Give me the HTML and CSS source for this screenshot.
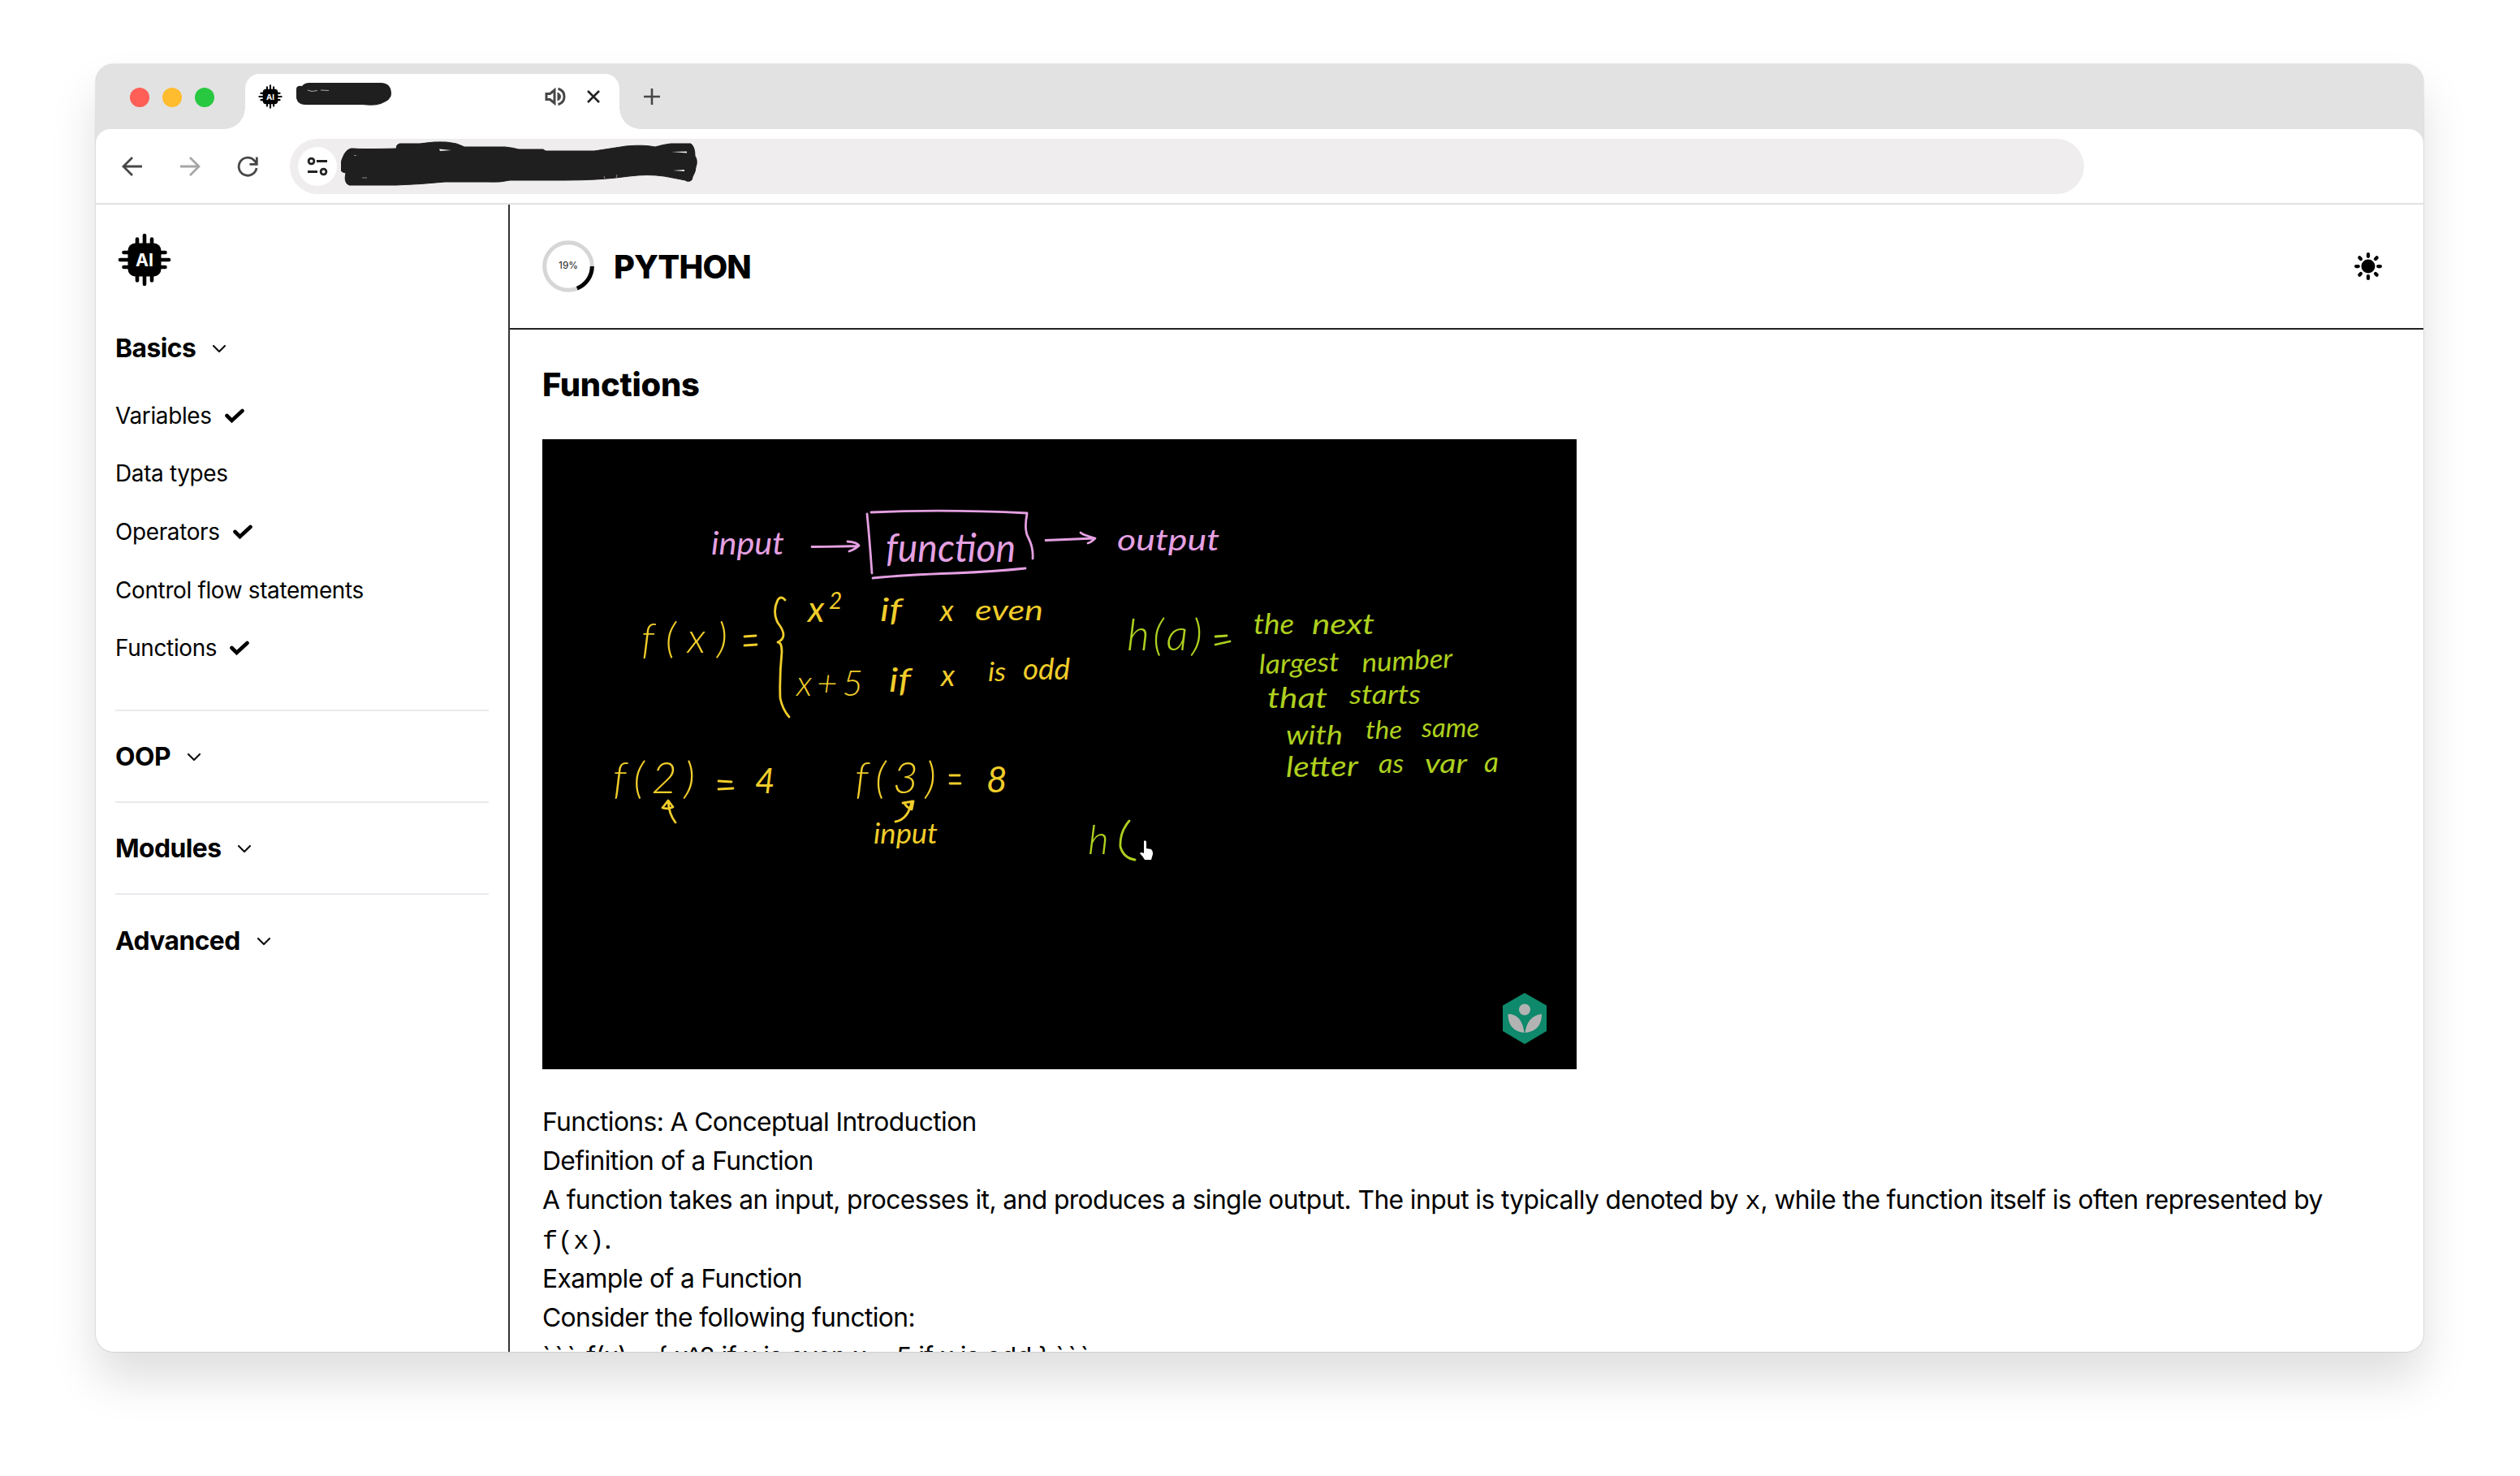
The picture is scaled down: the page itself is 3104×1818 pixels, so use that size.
FILE: index.html
```html
<!DOCTYPE html>
<html lang="en">
<head>
<meta charset="utf-8">
<title>Python – Functions</title>
<link rel="stylesheet" href="styles.css">
</head>
<body>
<svg class="defs" width="0" height="0" aria-hidden="true">
  <defs>
    <symbol id="chip" viewBox="0 0 66 66">
      <g fill="none" stroke="currentColor" stroke-width="4.6" stroke-linecap="round">
        <path d="M33 3v60M24 7.500v51M42 7.500v51M3 33h60M7.500 24h51M7.500 42h51"/>
      </g>
      <rect x="12.500" y="12.500" width="41" height="41" rx="9" fill="currentColor"/>
      <text x="33" y="41" class="chip-label" textLength="22" lengthAdjust="spacingAndGlyphs">AI</text>
    </symbol>
    <symbol id="chevron" viewBox="0 0 18 12"><path d="M2 2l7 7 7-7" fill="none" stroke="#111" stroke-width="2.200" stroke-linecap="round" stroke-linejoin="round"/></symbol>
    <symbol id="check" viewBox="0 0 24 18"><path d="M2.500 9l6 6L21.500 3" fill="none" stroke="#000" stroke-width="4.600" stroke-linecap="round"/></symbol>
  </defs>
</svg>

<div class="window">
  <header class="tabstrip">
    <div class="lights"><i class="red"></i><i class="yellow"></i><i class="green"></i></div>
    <div class="tab">
      <svg class="favicon"><use href="#chip"/></svg>
      <svg class="tab-mark" viewBox="0 0 118 30"><path d="M8 5Q11 1 17 1h88q13 0 13 14 0 7-13 12-8 3-22 1H12q-9 0-11-8V9Q1 4 8 5z" fill="#1f1f1f"/><path d="M15 10l5 1.500 7-1M31 10l10 .5" stroke="#aaa" stroke-width="1.200" fill="none"/></svg>
      <svg class="speaker" viewBox="0 0 26 24"><g fill="none" stroke="#474747" stroke-width="3"><path d="M2 8.500h4.500L12 4v16l-5.500-4.500H2z"/><path d="M16.500 2.300q7.500 2.200 7.500 9.700t-7.500 9.700"/></g><path d="M15.500 6.500q4.500 2 4.500 5.500t-4.500 5.500z" fill="#474747"/></svg>
      <svg class="close" viewBox="0 0 18 18"><path d="M2 2l14 14M16 2L2 16" stroke="#222" stroke-width="2.600"/></svg>
    </div>
    <svg class="plus" viewBox="0 0 22 22"><path d="M11 1v20M1 11h20" stroke="#474747" stroke-width="2.600"/></svg>
  </header>

  <div class="toolbar">
    <svg class="nav" viewBox="0 0 26 26"><path d="M25 13H2.500M13 2L2 13l11 11" fill="none" stroke="#474747" stroke-width="2.800"/></svg>
    <svg class="nav" viewBox="0 0 26 26"><path d="M1 13h22.500M13 2l11 11-11 11" fill="none" stroke="#a6a6a6" stroke-width="2.800"/></svg>
    <svg class="nav" viewBox="0 0 26 26"><path d="M24 15A11 11 0 1 1 21.500 6L24 9M24.300 1.500v8.800h-8.800" fill="none" stroke="#474747" stroke-width="2.800"/></svg>
    <div class="address">
      <span class="site"><svg viewBox="0 0 26 24"><g fill="none" stroke="#222" stroke-width="2.800"><circle cx="5.500" cy="5.500" r="3.400"/><path d="M12 5.500h13M1 18.500h12"/><circle cx="20.500" cy="18.500" r="3.400"/></g></svg></span>
      <svg class="address-mark" viewBox="421 174 440 56"><path d="M437 183q10 1 52 0 0-5 4-6l25 0q38-6 55 4 30 0 50 0 10 1 17 3l30 0 3 2h60q20-3 39-6 22-2 36 1 10-3 19-4h25q5 4 5 15 4 6 1 14 0 5-4 12 0 4-3 5-4 1-6-1-15-3-26-5-20-3-43 0-35 5-80 5h-67q-12 3-27 2h-53q-30 3-60 4h-58q-7-3-4-15-8-1-7-8 4-20 13-22z" fill="#1f1f1f" stroke="#1f1f1f" stroke-linejoin="round"/><path d="M542 183.500l15 1.500-14 1zM828 187l19-.5v2zM830 210l14-1v2z" fill="#efedee"/><path d="M437 191.500h3M447 219h6M745 217l1 3M761 215l-1 4" stroke="#888"/></svg>
    </div>
  </div>

  <div class="app">
    <aside class="sidebar">
      <svg class="logo"><use href="#chip"/></svg>
      <section>
        <h3>Basics<svg class="chev"><use href="#chevron"/></svg></h3>
        <ul>
          <li>Variables<svg class="check"><use href="#check"/></svg></li>
          <li>Data types</li>
          <li>Operators<svg class="check"><use href="#check"/></svg></li>
          <li>Control flow statements</li>
          <li>Functions<svg class="check"><use href="#check"/></svg></li>
        </ul>
      </section>
      <section><h3>OOP<svg class="chev"><use href="#chevron"/></svg></h3></section>
      <section><h3>Modules<svg class="chev"><use href="#chevron"/></svg></h3></section>
      <section><h3>Advanced<svg class="chev"><use href="#chevron"/></svg></h3></section>
    </aside>

    <main>
      <div class="course">
        <svg class="ring" viewBox="0 0 64 64"><circle cx="32" cy="32" r="29.300" fill="none" stroke="#d6d6d6" stroke-width="5"/><path d="M61.300 32A29.300 29.300 0 0 1 42.800 59.200" fill="none" stroke="#000" stroke-width="5"/><text x="32" y="35" text-anchor="middle" textLength="24">19%</text></svg>
        <h1>PYTHON</h1>
        <svg class="sun" viewBox="-16 -16 32 32"><circle r="8"/><path d="M0-11.500v-2.500M0 11.500v2.500M-11.500 0h-2.500M11.500 0h2.500M-8.500-8.500l-1.500-1.500M8.500-8.500l1.500-1.500M-8.500 8.500l-1.500 1.500M8.500 8.500l1.500 1.500" stroke="#000" stroke-width="4" stroke-linecap="round"/></svg>
      </div>
      <article>
        <h2>Functions</h2>
        <svg class="video" viewBox="668 541 1274 776">
          <g class="pink">
            <g class="ink">
              <path d="M1000 673.500q30 0 57-1M1044 667q12 1 14 5-4 4-12 7"/>
              <path d="M1068 633q3 30 6 73M1073 631q90-4 192 1M1265 633q-4 20 2 30 6 12 5 25M1075 712q40-4 100-6 50-2 88-6"/>
              <path d="M1288 665.500l60-2.500M1331 656q3 3 18 7-5 5-9 6"/>
            </g>
            <text x="876" y="683" font-size="38" textLength="90" lengthAdjust="spacingAndGlyphs">input</text>
            <text x="1091" y="692" font-size="49" textLength="160" lengthAdjust="spacingAndGlyphs">function</text>
            <text x="1376" y="678" font-size="36" textLength="126" lengthAdjust="spacingAndGlyphs">output</text>
          </g>
          <g class="yellow-ink">
            <g class="ink">
              <path d="M967 739q-5-6-9 0-7 14 0 28 14 18 0 24 5 0 5 12-3 30-2 57 3 14 11 23"/>
              <path d="M917 784l14-1M917 795l15-1M885 962l16 1M885 972l18-1M1170 955h12M1170 965h13"/>
              <path d="M832 1013q-8-10-9-26M816 995l7-9 6 8q-6 3-13 1M1103 1012q16-3 20-25M1112 989l13-2-2 10q-6-2-9-8"/>
            </g>
            <text class="large" x="790" y="804" font-size="52" textLength="106">f(x)</text>
            <text x="995" y="766" font-size="44">x</text><text x="1021" y="750" font-size="28">2</text>
            <text x="1084" y="765" font-size="38" textLength="27" lengthAdjust="spacingAndGlyphs">if</text><text x="1158" y="765" font-size="36">x</text><text x="1201" y="764" font-size="34" textLength="84" lengthAdjust="spacingAndGlyphs">even</text>
            <text class="large" x="981" y="857" font-size="44" textLength="82">x+5</text><text x="1095" y="852" font-size="40" textLength="27" lengthAdjust="spacingAndGlyphs">if</text><text x="1159" y="845" font-size="37">x</text><text x="1217" y="839" font-size="33" textLength="22" lengthAdjust="spacingAndGlyphs">is</text><text x="1260" y="837" font-size="36" textLength="58" lengthAdjust="spacingAndGlyphs">odd</text>
            <text class="large" x="755" y="977" font-size="54" textLength="101">f(2)</text><text x="930" y="977" font-size="42">4</text>
            <text class="large" x="1053" y="977" font-size="54" textLength="100">f(3)</text><text x="1215" y="976" font-size="44">8</text>
            <text x="1076" y="1039" font-size="34" textLength="79" lengthAdjust="spacingAndGlyphs">input</text>
          </g>
          <g class="green-ink">
            <g class="ink"><path d="M1497 784l14-1M1497 794l18-4M1391 1011q-12 14-11 32 4 14 18 16"/></g>
            <text class="large" x="1388" y="801" font-size="54" textLength="93">h(a)</text>
            <text x="1544" y="781" font-size="35" textLength="50" lengthAdjust="spacingAndGlyphs">the</text><text x="1616" y="781" font-size="35" textLength="77" lengthAdjust="spacingAndGlyphs">next</text>
            <text x="1551" y="830" font-size="33" textLength="99" lengthAdjust="spacingAndGlyphs" transform="rotate(-2 1551 830)">largest</text><text x="1678" y="828" font-size="33" textLength="112" lengthAdjust="spacingAndGlyphs" transform="rotate(-3 1678 828)">number</text>
            <text x="1561" y="872" font-size="35" textLength="74" lengthAdjust="spacingAndGlyphs">that</text><text x="1662" y="867" font-size="33" textLength="88" lengthAdjust="spacingAndGlyphs">starts</text>
            <text x="1584" y="917" font-size="32" textLength="70" lengthAdjust="spacingAndGlyphs">with</text><text x="1682" y="910" font-size="30" textLength="45" lengthAdjust="spacingAndGlyphs">the</text><text x="1751" y="908" font-size="32" textLength="71" lengthAdjust="spacingAndGlyphs">same</text>
            <text x="1584" y="957" font-size="35" textLength="89" lengthAdjust="spacingAndGlyphs" transform="rotate(-1 1584 957)">letter</text><text x="1698" y="952" font-size="32" textLength="31" lengthAdjust="spacingAndGlyphs">as</text><text x="1755" y="952" font-size="32" textLength="52" lengthAdjust="spacingAndGlyphs">var</text><text x="1828" y="951" font-size="35">a</text>
            <text class="large" x="1340" y="1052" font-size="50">h</text>
          </g>
          <path d="M1409 1036q2-2 3 1v8l6 1q2 2 2 6l-2 7h-8q-3-5-6-8 1-2 5 0z" fill="#fff"/>
          <g><path d="M1878 1223l27 15.500v31.500l-27 16-27-16v-31.500z" fill="#0e896b"/><g fill="#b3b3b3"><circle cx="1878" cy="1243.500" r="7"/><path d="M1857.500 1249q17 0 20 23-20-2-20-23zM1899 1249q0 21-20.500 23 3-21 20.500-23z"/></g></g>
        </svg>
        <div class="notes">
          <p>Functions: A Conceptual Introduction</p>
          <p>Definition of a Function</p>
          <p>A function takes an input, processes it, and produces a single output. The input is typically denoted by <code>x</code>, while the function itself is often represented by <code>f(x)</code>.</p>
          <p>Example of a Function</p>
          <p>Consider the following function:</p>
          <p><span class="ticks">```</span> f(x) = { x^2 if x is even x + 5 if x is odd } <span class="ticks">```</span></p>
        </div>
      </article>
    </main>
  </div>
</div>
</body>
</html>
```
FILE: styles.css
```css
* { box-sizing: border-box; margin: 0; padding: 0; }
body { width: 3104px; height: 1818px; padding: 79px 119px 0 118px; overflow: hidden; background: #fff; color: #000; font-family: Inter, "Liberation Sans", sans-serif; }
svg { display: block; flex: none; }
.defs { position: absolute; }
.window { height: 1586px; overflow: hidden; display: flex; flex-direction: column; border-radius: 22px; background: #e2e2e2; box-shadow: 0 0 2px rgba(0,0,0,.28), 0 34px 56px rgba(0,0,0,.13); }

.tabstrip { height: 80px; flex: none; display: flex; align-items: flex-start; padding: 12px 0 0 42px; }
.lights { display: flex; gap: 16px; padding-top: 17px; width: 142px; }
.lights i { width: 24px; height: 24px; border-radius: 50%; }
.red { background: #ff5f57; }
.yellow { background: #febc2e; }
.green { background: #28c840; }
.tab { position: relative; width: 461px; height: 68px; display: flex; align-items: flex-start; padding-left: 16px; border-radius: 18px 18px 0 0; background: #fff; }
.tab::before, .tab::after { content: ""; position: absolute; bottom: 0; width: 26px; height: 26px; }
.tab::before { left: -26px; background: radial-gradient(circle at 0 0, transparent 25.500px, #fff 26px); }
.tab::after { right: -26px; background: radial-gradient(circle at 100% 0, transparent 25.500px, #fff 26px); }
.favicon { width: 30px; height: 30px; margin-top: 13px; }
.tab-mark { width: 118px; height: 30px; margin: 10px 0 0 16px; }
.speaker { width: 26px; height: 24px; margin: 16px 0 0 189px; }
.close { width: 18px; height: 18px; margin: 19px 0 0 25px; }
.plus { width: 22px; height: 22px; margin: 17px 0 0 29px; }

.toolbar { height: 93px; flex: none; display: flex; align-items: center; padding: 1px 0 1px 32px; border-radius: 18px 18px 0 0; border-bottom: 2px solid #e2e2e2; background: #fff; }
.nav { width: 26px; height: 26px; margin-right: 45px; }
.address { width: 2210px; height: 68px; margin-left: -6px; display: flex; align-items: center; padding-left: 10px; border-radius: 34px; background: #efedee; }
.site { width: 48px; height: 48px; display: grid; place-items: center; border-radius: 50%; background: #fff; }
.site svg { width: 26px; height: 24px; }
.address-mark { width: 440px; height: 56px; margin: -6px 0 0 5px; }

.app { flex: 1; min-height: 0; display: flex; background: #fff; }
.sidebar { width: 510px; flex: none; padding: 35px 24px 0; border-right: 2px solid #333; }
.logo { width: 66px; height: 66px; margin-left: 3px; }
h3 { height: 111px; display: flex; align-items: center; padding-top: 1px; font-size: 31.800px; font-weight: 700; letter-spacing: -.55px; }
section { border-bottom: 2px solid #e9e9ee; }
section + section { height: 113.300px; }
section:last-child { border: 0; }
section:first-of-type { height: 522.500px; padding-top: 35px; }
section:first-of-type h3 { height: 80px; }
.chev { width: 18px; height: 12px; margin: 3px 0 0 20px; }
ul { list-style: none; margin-top: 8px; }
li { height: 71.600px; display: flex; align-items: center; font-size: 27.900px; letter-spacing: -.33px; }
.check { width: 24px; height: 18px; margin-left: 16px; }

main { flex: 1; min-width: 0; }
.course { height: 154px; display: flex; align-items: center; padding: 0 51px 0 40px; border-bottom: 2px solid #222; }
.ring { width: 64px; height: 64px; }
.ring text { font-size: 11.900px; fill: #222; }
h1 { margin: 2px 0 0 24px; font-size: 39.800px; font-weight: 800; line-height: 48px; letter-spacing: -.85px; }
.sun { width: 34px; height: 34px; margin-left: auto; }
article { padding: 43px 40px 0; }
h2 { font-size: 39.800px; font-weight: 800; line-height: 50px; letter-spacing: -.2px; }
.video { width: 1274px; height: 776px; margin-top: 42px; background: #000; }
.notes { margin-top: 41px; font-size: 31.800px; line-height: 48.200px; letter-spacing: -.61px; }
code { font-family: "Liberation Mono", monospace; font-size: 31.800px; line-height: 1; letter-spacing: 0; }
.ticks { letter-spacing: 5px; }

.chip-label { font: 700 21px Inter, sans-serif; fill: #fff; text-anchor: middle; }
.video text { font-family: Lato, sans-serif; font-weight: 400; font-style: italic; }
.video .large { font-weight: 300; }
.ink { fill: none; stroke-width: 2.800; stroke-linecap: round; stroke-linejoin: round; }
.pink text { fill: #e5a0e2; }
.pink .ink { stroke: #e5a0e2; }
.yellow-ink text { fill: #f0cd2a; }
.yellow-ink .ink { stroke: #f0cd2a; }
.green-ink text { fill: #aed01e; }
.green-ink .ink { stroke: #aed01e; }
```
